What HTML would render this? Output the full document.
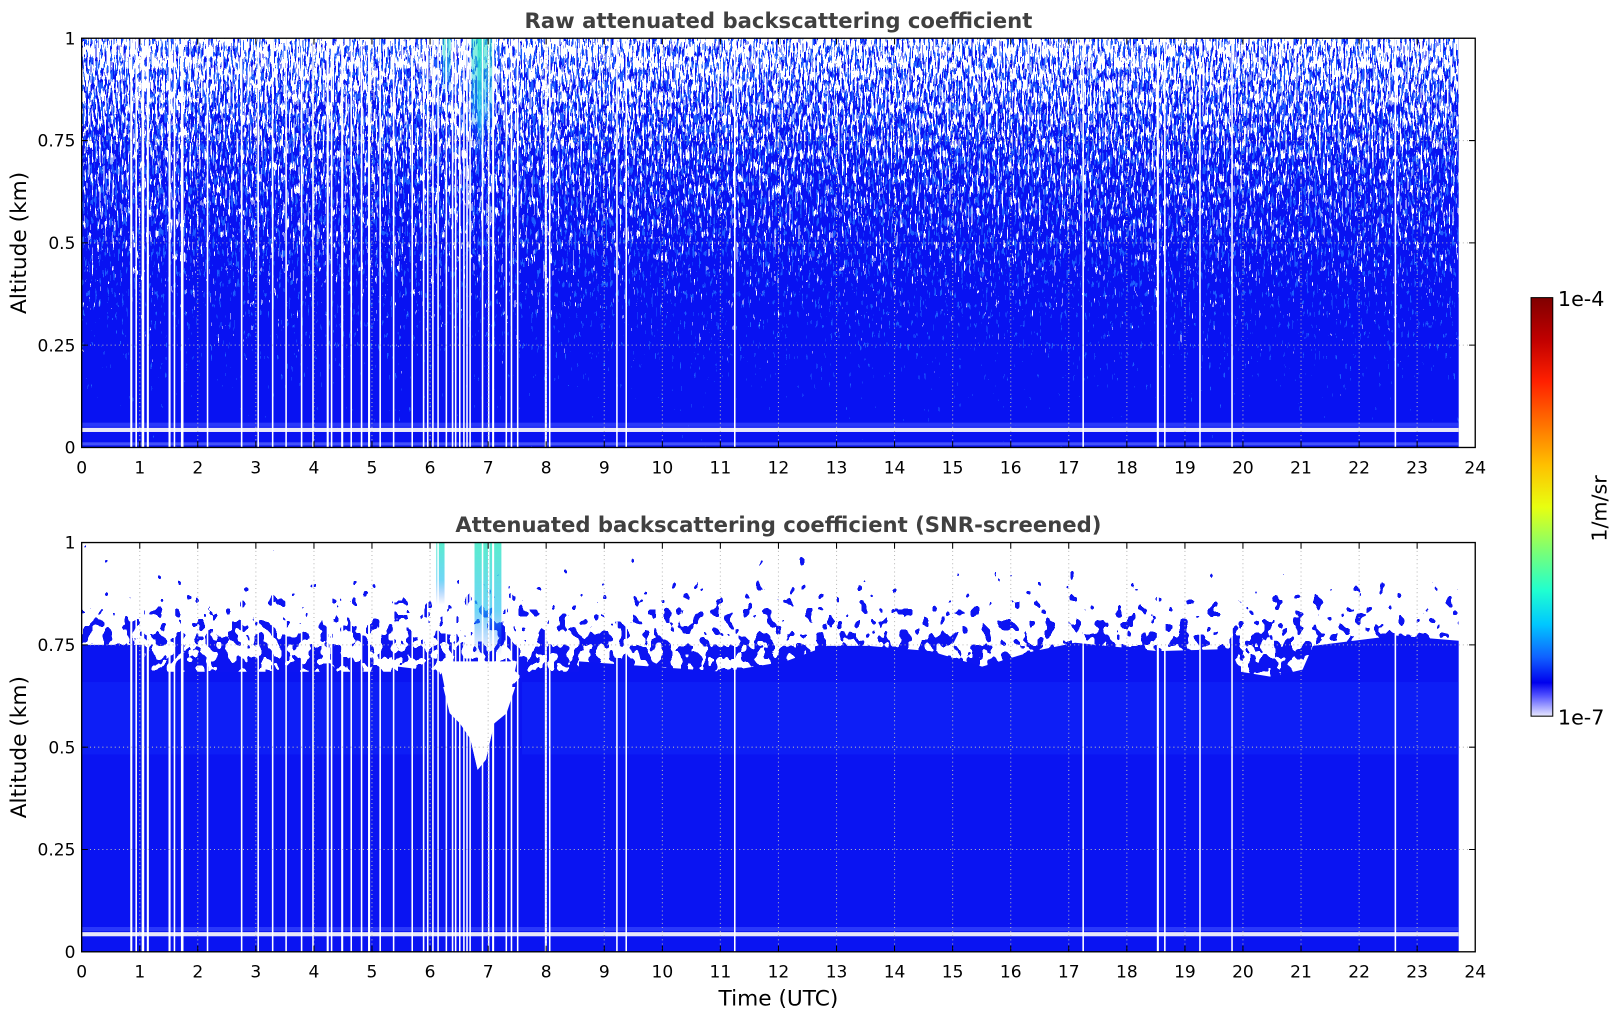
<!DOCTYPE html>
<html><head><meta charset="utf-8"><style>html,body{margin:0;padding:0;background:#fff;}svg{display:block;}text{font-family:"DejaVu Sans","Liberation Sans",sans-serif;}</style></head>
<body>
<svg width="1621" height="1020" viewBox="0 0 1568 987" preserveAspectRatio="none" xmlns="http://www.w3.org/2000/svg">
<defs>
<linearGradient id="gTop" x1="0" y1="37" x2="0" y2="433" gradientUnits="userSpaceOnUse">
<stop offset="0" stop-color="#fff" stop-opacity="1"/><stop offset="0.25" stop-color="#fff" stop-opacity="0.88"/><stop offset="0.5" stop-color="#fff" stop-opacity="0.78"/><stop offset="0.75" stop-color="#fff" stop-opacity="0.64"/><stop offset="1" stop-color="#fff" stop-opacity="0.45"/>
</linearGradient>
<linearGradient id="gTop2" x1="0" y1="37" x2="0" y2="433" gradientUnits="userSpaceOnUse">
<stop offset="0" stop-color="#fff" stop-opacity="0.98"/><stop offset="0.5" stop-color="#fff" stop-opacity="0.82"/><stop offset="1" stop-color="#fff" stop-opacity="0.6"/>
</linearGradient>
<linearGradient id="gBl" x1="0" y1="525" x2="0" y2="665" gradientUnits="userSpaceOnUse">
<stop offset="0" stop-color="#fff" stop-opacity="0.5"/><stop offset="0.5" stop-color="#fff" stop-opacity="0.75"/><stop offset="1" stop-color="#fff" stop-opacity="1"/>
</linearGradient>
<filter id="fw" filterUnits="userSpaceOnUse" x="79" y="37" width="1332" height="396" color-interpolation-filters="sRGB">
<feTurbulence type="fractalNoise" baseFrequency="0.55 0.09" numOctaves="2" seed="4" result="n"/>
<feColorMatrix in="n" type="matrix" values="0 0 0 0 0 0 0 0 0 0 0 0 0 0 0 1 0 0 0 0" result="na"/>
<feComposite in="na" in2="SourceGraphic" operator="arithmetic" k1="0" k2="1" k3="1" k4="-0.95" result="s"/>
<feComponentTransfer in="s" result="t"><feFuncA type="discrete" tableValues="0 1"/></feComponentTransfer>
<feFlood flood-color="#ffffff"/><feComposite in2="t" operator="in"/>
</filter>
<filter id="fl" filterUnits="userSpaceOnUse" x="79" y="37" width="1332" height="396" color-interpolation-filters="sRGB">
<feTurbulence type="fractalNoise" baseFrequency="0.5 0.1" numOctaves="2" seed="11" result="n"/>
<feColorMatrix in="n" type="matrix" values="0 0 0 0 0 0 0 0 0 0 0 0 0 0 0 1 0 0 0 0" result="na"/>
<feComposite in="na" in2="SourceGraphic" operator="arithmetic" k1="0" k2="1" k3="1" k4="-0.95" result="s"/>
<feComponentTransfer in="s" result="t"><feFuncA type="discrete" tableValues="0 1"/></feComponentTransfer>
<feFlood flood-color="#1e5cff"/><feComposite in2="t" operator="in"/>
</filter>
<filter id="fb" filterUnits="userSpaceOnUse" x="79" y="525" width="1332" height="140" color-interpolation-filters="sRGB">
<feTurbulence type="fractalNoise" baseFrequency="0.1 0.08" numOctaves="2" seed="7" result="n"/>
<feColorMatrix in="n" type="matrix" values="0 0 0 0 0 0 0 0 0 0 0 0 0 0 0 1 0 0 0 0" result="na"/>
<feComposite in="na" in2="SourceGraphic" operator="arithmetic" k1="0" k2="1" k3="1" k4="-0.88" result="s"/>
<feComponentTransfer in="s" result="t"><feFuncA type="discrete" tableValues="0 1"/></feComponentTransfer>
<feFlood flood-color="#0c14f2"/><feComposite in2="t" operator="in"/>
</filter>
<linearGradient id="cb" x1="0" y1="0" x2="0" y2="1">
<stop offset="0" stop-color="#800000"/><stop offset="0.1" stop-color="#c00000"/><stop offset="0.2" stop-color="#ff2000"/><stop offset="0.3" stop-color="#ff7000"/><stop offset="0.4" stop-color="#ffc000"/><stop offset="0.5" stop-color="#e8ff10"/><stop offset="0.6" stop-color="#80ff70"/><stop offset="0.7" stop-color="#20ffd0"/><stop offset="0.78" stop-color="#00c8ff"/><stop offset="0.86" stop-color="#1060ff"/><stop offset="0.92" stop-color="#0000ee"/><stop offset="0.95" stop-color="#5050ff"/><stop offset="1" stop-color="#e8e8ff"/>
</linearGradient>
<linearGradient id="cy" x1="0" y1="0" x2="0" y2="1">
<stop offset="0" stop-color="#30e8c0"/><stop offset="0.6" stop-color="#20c0f0" stop-opacity="0.8"/><stop offset="1" stop-color="#1060ff" stop-opacity="0"/>
</linearGradient>
<g id="wl" fill="#fff">
<rect x="126" y="37" width="2" height="396"/><rect x="131" y="37" width="1.5" height="396"/><rect x="137" y="37" width="2.5" height="396"/><rect x="142" y="37" width="2" height="396"/><rect x="163" y="37" width="2" height="396"/><rect x="168" y="37" width="1.5" height="396"/><rect x="175" y="37" width="2.5" height="396"/><rect x="200" y="37" width="1.5" height="396"/><rect x="233" y="37" width="1.5" height="396"/><rect x="249" y="37" width="1.5" height="396"/><rect x="263" y="37" width="1.5" height="396"/><rect x="276" y="37" width="1.5" height="396"/><rect x="291" y="37" width="1.5" height="396"/><rect x="302" y="37" width="1.5" height="396"/><rect x="316" y="37" width="2" height="396"/><rect x="320" y="37" width="1.5" height="396"/><rect x="330" y="37" width="2" height="396"/><rect x="339" y="37" width="1.5" height="396"/><rect x="349" y="37" width="1.5" height="396"/><rect x="356" y="37" width="2" height="396"/><rect x="367" y="37" width="1.5" height="396"/><rect x="380" y="37" width="1.5" height="396"/><rect x="398" y="37" width="1.5" height="396"/><rect x="409" y="37" width="1.5" height="396"/><rect x="413" y="37" width="1.5" height="396"/><rect x="418" y="37" width="1.5" height="396"/><rect x="423" y="37" width="1.5" height="396"/><rect x="431" y="37" width="1.5" height="396"/><rect x="437" y="37" width="1.5" height="396"/><rect x="440" y="37" width="1.5" height="396"/><rect x="444" y="37" width="1.5" height="396"/><rect x="448" y="37" width="1.5" height="396"/><rect x="451" y="37" width="1.5" height="396"/><rect x="454" y="37" width="1.5" height="396"/><rect x="466" y="37" width="1.5" height="396"/><rect x="472" y="37" width="1.5" height="396"/><rect x="476" y="37" width="2" height="396"/><rect x="489" y="37" width="1.5" height="396"/><rect x="494" y="37" width="1.5" height="396"/><rect x="500" y="37" width="1.5" height="396"/><rect x="527" y="37" width="2" height="396"/><rect x="531" y="37" width="1.5" height="396"/><rect x="596" y="37" width="1.5" height="396"/><rect x="605" y="37" width="1.5" height="396"/><rect x="710" y="37" width="1.5" height="396"/><rect x="1047" y="37" width="1.5" height="396"/><rect x="1119" y="37" width="2" height="396"/><rect x="1126" y="37" width="1.5" height="396"/><rect x="1160" y="37" width="1.5" height="396"/><rect x="1191" y="37" width="1.5" height="396"/><rect x="1349" y="37" width="1.5" height="396"/>
</g>
<g id="grid" stroke="#b8b8b8" stroke-width="1" stroke-dasharray="1,3" fill="none">
<path d="M135.2 37V433M191.3 37V433M247.5 37V433M303.7 37V433M359.8 37V433M416 37V433M472.2 37V433M528.3 37V433M584.5 37V433M640.7 37V433M696.8 37V433M753 37V433M809.2 37V433M865.3 37V433M921.5 37V433M977.7 37V433M1033.8 37V433M1090 37V433M1146.2 37V433M1202.3 37V433M1258.5 37V433M1314.7 37V433M1370.8 37V433M79 136H1427M79 235H1427M79 334H1427"/>
</g>
<g id="frame">
<rect x="79" y="37" width="1348" height="396" fill="none" stroke="#000" stroke-width="1.3"/>
<path stroke="#000" stroke-width="1" d="M135.2 433v-6M191.3 433v-6M247.5 433v-6M303.7 433v-6M359.8 433v-6M416 433v-6M472.2 433v-6M528.3 433v-6M584.5 433v-6M640.7 433v-6M696.8 433v-6M753 433v-6M809.2 433v-6M865.3 433v-6M921.5 433v-6M977.7 433v-6M1033.8 433v-6M1090 433v-6M1146.2 433v-6M1202.3 433v-6M1258.5 433v-6M1314.7 433v-6M1370.8 433v-6M135.2 37v6M191.3 37v6M247.5 37v6M303.7 37v6M359.8 37v6M416 37v6M472.2 37v6M528.3 37v6M584.5 37v6M640.7 37v6M696.8 37v6M753 37v6M809.2 37v6M865.3 37v6M921.5 37v6M977.7 37v6M1033.8 37v6M1090 37v6M1146.2 37v6M1202.3 37v6M1258.5 37v6M1314.7 37v6M1370.8 37v6M79 136h6M79 235h6M79 334h6M1427 136h-6M1427 235h-6M1427 334h-6"/>
<g font-size="16.5" fill="#000" text-anchor="middle">
<text x="79" y="458">0</text><text x="135.2" y="458">1</text><text x="191.3" y="458">2</text><text x="247.5" y="458">3</text><text x="303.7" y="458">4</text><text x="359.8" y="458">5</text><text x="416" y="458">6</text><text x="472.2" y="458">7</text><text x="528.3" y="458">8</text><text x="584.5" y="458">9</text><text x="640.7" y="458">10</text><text x="696.8" y="458">11</text><text x="753" y="458">12</text><text x="809.2" y="458">13</text><text x="865.3" y="458">14</text><text x="921.5" y="458">15</text><text x="977.7" y="458">16</text><text x="1033.8" y="458">17</text><text x="1090" y="458">18</text><text x="1146.2" y="458">19</text><text x="1202.3" y="458">20</text><text x="1258.5" y="458">21</text><text x="1314.7" y="458">22</text><text x="1370.8" y="458">23</text><text x="1427" y="458">24</text>
</g>
<g font-size="16.5" fill="#000" text-anchor="end">
<text x="73" y="43">1</text><text x="73" y="142">0.75</text><text x="73" y="241">0.5</text><text x="73" y="340">0.25</text><text x="73" y="439">0</text>
</g>
<text transform="translate(25 235) rotate(-90)" font-size="21" text-anchor="middle">Altitude (km)</text>
</g>
</defs>

<rect width="1568" height="987" fill="#fff"/>

<!-- TOP PLOT -->
<rect x="79" y="37" width="1332" height="396" fill="#0812f2"/>
<rect x="79" y="37" width="1332" height="396" fill="url(#gTop2)" filter="url(#fl)"/>
<rect x="79" y="37" width="1332" height="396" fill="url(#gTop)" filter="url(#fw)"/>
<rect x="428" y="37" width="8" height="60" fill="url(#cy)" opacity="0.6"/>
<rect x="456" y="37" width="22" height="110" fill="url(#cy)" opacity="0.6"/>
<rect x="462" y="37" width="6" height="130" fill="url(#cy)" opacity="0.8"/>
<rect x="79" y="409" width="1332" height="4" fill="#4050ff" opacity="0.6"/>
<rect x="79" y="414" width="1332" height="4" fill="#e8e8f8"/>
<rect x="79" y="428" width="1332" height="3" fill="#6a7cff" opacity="0.6"/>
<use href="#wl"/>
<use href="#grid"/>
<use href="#frame"/>
<text x="753" y="27" font-size="20.5" font-weight="bold" fill="#404040" text-anchor="middle">Raw attenuated backscattering coefficient</text>

<!-- BOTTOM PLOT -->
<rect x="79" y="525" width="1332" height="140" fill="url(#gBl)" filter="url(#fb)"/>
<polygon fill="#0a14f2" points="79,624 140,624 140,650 385,650 385,645 425,650 435,690 445,700 455,715 462,745 470,735 478,700 490,690 500,660 515,648 530,650 560,650 560,640 700,650 760,640 800,625 840,625 900,630 950,645 1000,630 1040,622 1120,630 1190,628 1200,650 1230,655 1260,648 1270,625 1350,615 1411,620 1411,921 79,921"/>
<polygon fill="#fff" points="425,640 500,640 490,690 478,700 470,735 462,745 455,715 445,700 435,690"/>
<rect x="79" y="660" width="340" height="70" fill="#1838ff" opacity="0.3"/>
<rect x="505" y="660" width="906" height="70" fill="#1838ff" opacity="0.3"/>
<rect x="422" y="525" width="8" height="60" fill="url(#cy)" opacity="0.8"/>
<rect x="459" y="525" width="26" height="110" fill="url(#cy)" opacity="0.8"/>
<rect x="79" y="897" width="1332" height="4" fill="#4050ff" opacity="0.6"/>
<rect x="79" y="902" width="1332" height="4" fill="#e8e8f8"/>
<use href="#wl" y="488"/>
<use href="#grid" y="488"/>
<use href="#frame" y="488"/>
<text x="753" y="515" font-size="20.5" font-weight="bold" fill="#404040" text-anchor="middle">Attenuated backscattering coefficient (SNR-screened)</text>
<text x="753" y="973" font-size="21" text-anchor="middle">Time (UTC)</text>

<!-- COLORBAR -->
<rect x="1481" y="288" width="21" height="405" fill="url(#cb)" stroke="#000" stroke-width="1"/>
<text x="1507" y="296" font-size="20">1e-4</text>
<text x="1507" y="701" font-size="20">1e-7</text>
<text transform="translate(1554 492) rotate(-90)" font-size="20" text-anchor="middle">1/m/sr</text>
</svg>
</body></html>
